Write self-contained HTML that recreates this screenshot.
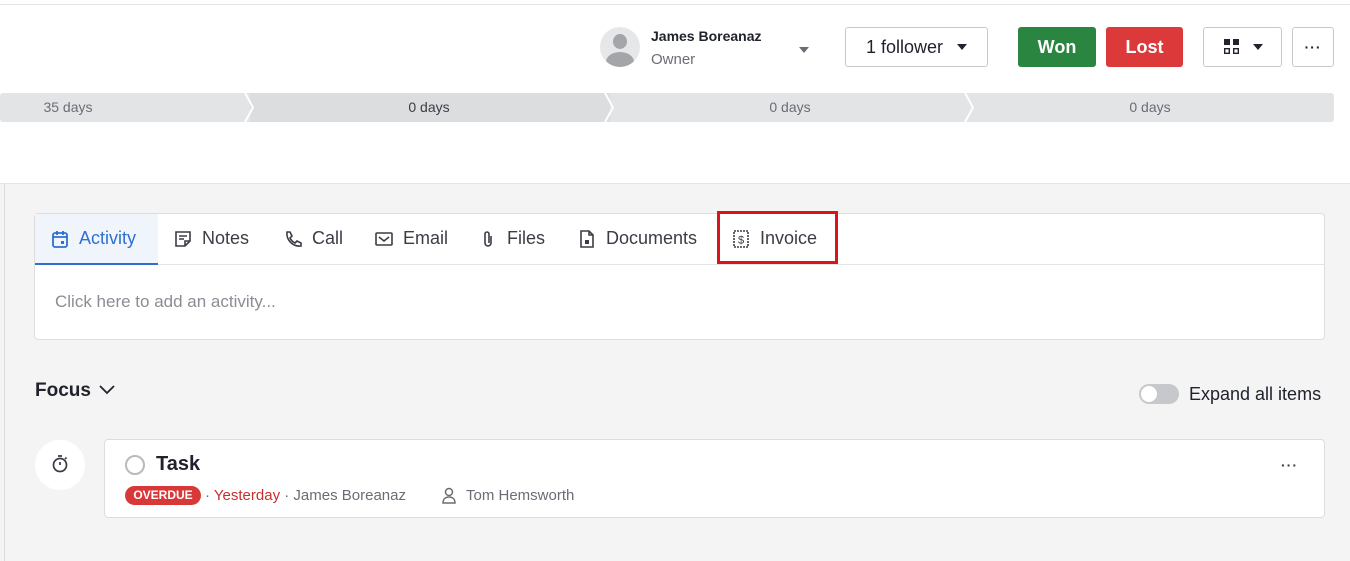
<!DOCTYPE html>
<html><head><meta charset="utf-8"><style>
*{box-sizing:border-box;margin:0;padding:0}
body{width:1350px;height:561px;overflow:hidden;background:#fff;font-family:"Liberation Sans",sans-serif;color:#21232c;position:relative}
.a{position:absolute}
.btn{position:absolute;border:1px solid #c6c8cc;border-radius:3px;background:#fff;display:flex;align-items:center;justify-content:center}
.tab{position:absolute;top:213px;height:51px;display:flex;align-items:center;font-size:18px;color:#3a3d45}
.tab svg{margin-right:9px}
</style></head><body>
<div class="a" style="left:0;top:4px;width:1350px;height:1px;background:#e3e4e6"></div>
<!-- owner -->
<div class="a" style="left:600px;top:27px;width:40px;height:40px;border-radius:50%;background:#e6e7e9;overflow:hidden">
<div class="a" style="left:13px;top:7px;width:14px;height:15px;border-radius:50%;background:#a3a5a9"></div>
<div class="a" style="left:6px;top:25px;width:28px;height:20px;border-radius:50%;background:#a3a5a9"></div></div>
<div class="a" style="left:651px;top:28px;font-size:14px;font-weight:bold;color:#21232c">James Boreanaz</div>
<div class="a" style="left:651px;top:51px;font-size:15px;color:#6a6d75">Owner</div>
<div class="a" style="left:799px;top:47px;border-left:5px solid transparent;border-right:5px solid transparent;border-top:6px solid #6a6d75"></div>
<div class="btn" style="left:845px;top:27px;width:143px;height:40px;font-size:18px;color:#21232c">1 follower<span style="margin-left:14px;border-left:5px solid transparent;border-right:5px solid transparent;border-top:6px solid #21232c"></span></div>
<div class="btn" style="left:1018px;top:27px;width:78px;height:40px;background:#2a8540;border-color:#2a8540;color:#fff;font-size:18px;font-weight:bold">Won</div>
<div class="btn" style="left:1106px;top:27px;width:77px;height:40px;background:#dc3a3a;border-color:#dc3a3a;color:#fff;font-size:18px;font-weight:bold">Lost</div>
<div class="btn" style="left:1203px;top:27px;width:79px;height:40px">
<svg width="18" height="18" viewBox="0 0 18 18"><rect x="1" y="1" width="6" height="6" fill="#21232c"/><rect x="10" y="1" width="6" height="6" fill="#21232c"/><rect x="1.7" y="10.7" width="4.6" height="4.6" fill="none" stroke="#21232c" stroke-width="1.4"/><rect x="10.7" y="10.7" width="4.6" height="4.6" fill="none" stroke="#21232c" stroke-width="1.4"/></svg>
<span style="margin-left:12px;border-left:5px solid transparent;border-right:5px solid transparent;border-top:6px solid #21232c"></span></div>
<div class="btn" style="left:1292px;top:27px;width:42px;height:40px;font-size:14px;font-weight:bold;letter-spacing:1px">···</div>
<!-- pipeline -->
<svg class="a" style="left:0;top:93px" width="1335" height="30">
<rect x="0" y="0" width="1334" height="29" rx="3" fill="#e3e4e6"/>
<rect x="250" y="0" width="360" height="29" fill="#dcdddf"/>
<path d="M245 0 L253 14.5 L245 29" fill="none" stroke="#fff" stroke-width="2"/>
<path d="M605 0 L613 14.5 L605 29" fill="none" stroke="#fff" stroke-width="2"/>
<path d="M965 0 L973 14.5 L965 29" fill="none" stroke="#fff" stroke-width="2"/>
<text x="68" y="19" font-size="14" fill="#6a6d75" text-anchor="middle" font-family="Liberation Sans">35 days</text>
<text x="429" y="19" font-size="14" fill="#3a3d45" text-anchor="middle" font-family="Liberation Sans">0 days</text>
<text x="790" y="19" font-size="14" fill="#6a6d75" text-anchor="middle" font-family="Liberation Sans">0 days</text>
<text x="1150" y="19" font-size="14" fill="#6a6d75" text-anchor="middle" font-family="Liberation Sans">0 days</text>
</svg>
<!-- grey area -->
<div class="a" style="left:0;top:183px;width:1350px;height:378px;background:#f4f4f4;border-top:1px solid #e3e4e6"></div>
<div class="a" style="left:4px;top:183px;width:1px;height:378px;background:#dcdddf"></div>
<div class="a" style="left:34px;top:213px;width:1291px;height:127px;background:#fff;border:1px solid #dcdddf;border-radius:4px"></div>
<div class="a" style="left:35px;top:264px;width:1289px;height:1px;background:#e3e4e6"></div>
<div class="a" style="left:35px;top:214px;width:123px;height:51px;background:#f0f5fc;border-bottom:2px solid #2f6fd1"></div>
<div class="tab" style="left:50px;color:#2f6fd1"><svg width="20" height="20" viewBox="0 0 20 20" fill="none" stroke="#2f6fd1" stroke-width="1.8"><rect x="3" y="4" width="14" height="14" rx="2"/><path d="M3 8h14M7 2v4M13 2v4"/><rect x="11" y="12" width="3" height="3" fill="#2f6fd1" stroke="none"/></svg>Activity</div>
<div class="tab" style="left:173px"><svg width="20" height="20" viewBox="0 0 20 20" fill="none" stroke="#3a3d45" stroke-width="1.6"><path d="M3 3h14v9l-5 5H3z M12 17v-5h5 M6 7h8 M6 10h5"/></svg>Notes</div>
<div class="tab" style="left:283px"><svg width="20" height="20" viewBox="0 0 20 20" fill="none" stroke="#3a3d45" stroke-width="1.6"><path d="M4 3l3 0 2 4-2 2c1 2 3 4 5 5l2-2 4 2v3c-8 1-15-6-14-14z"/></svg>Call</div>
<div class="tab" style="left:374px"><svg width="20" height="20" viewBox="0 0 20 20" fill="none" stroke="#3a3d45" stroke-width="1.6"><rect x="2" y="4" width="16" height="12" rx="1"/><path d="M5 8l5 4 5-4"/></svg>Email</div>
<div class="tab" style="left:478px"><svg width="20" height="20" viewBox="0 0 20 20" fill="none" stroke="#3a3d45" stroke-width="1.6"><path d="M13 7v7a3 3 0 0 1-6 0V5a2 2 0 0 1 4 0v9"/></svg>Files</div>
<div class="tab" style="left:577px"><svg width="20" height="20" viewBox="0 0 20 20" fill="none" stroke="#3a3d45" stroke-width="1.6"><path d="M4 2h8l4 4v12H4z M12 2v4h4"/><rect x="8" y="11" width="4" height="4" fill="#3a3d45" stroke="none"/></svg>Documents</div>
<div class="tab" style="left:731px"><svg width="20" height="20" viewBox="0 0 20 20" fill="none" stroke="#3a3d45" stroke-width="1.6"><path d="M3 2h14v16H3z" stroke-dasharray="2 1"/><text x="10" y="14.5" font-size="11" text-anchor="middle" fill="#3a3d45" stroke="none" font-family="Liberation Sans">$</text></svg>Invoice</div>
<div class="a" style="left:717px;top:211px;width:121px;height:53px;border:3px solid #d9141c"></div>
<div class="a" style="left:55px;top:292px;font-size:17px;color:#8a8d93">Click here to add an activity...</div>
<!-- focus -->
<div class="a" style="left:35px;top:380px;font-size:19px;font-weight:bold;color:#21232c">Focus</div>
<svg class="a" style="left:98px;top:383px" width="18" height="14"><path d="M2 3l7 7 7-7" fill="none" stroke="#21232c" stroke-width="1.8"/></svg>
<div class="a" style="left:1139px;top:384px;width:40px;height:20px;border-radius:10px;background:#c6c8cc"><div class="a" style="left:2px;top:2px;width:16px;height:16px;border-radius:50%;background:#fff"></div></div>
<div class="a" style="left:1189px;top:384px;font-size:18px;color:#21232c">Expand all items</div>
<div class="a" style="left:35px;top:440px;width:50px;height:50px;border-radius:50%;background:#fff"></div>
<svg class="a" style="left:50px;top:454px" width="20" height="20" viewBox="0 0 20 20" fill="none" stroke="#3a3d45" stroke-width="1.7"><circle cx="10" cy="11" r="6.5"/><path d="M10 11V8M8 2h4M15 5l1.5-1.5"/></svg>
<div class="a" style="left:104px;top:439px;width:1221px;height:79px;background:#fff;border:1px solid #dcdddf;border-radius:4px"></div>
<div class="a" style="left:125px;top:455px;width:20px;height:20px;border-radius:50%;border:2px solid #b8babe"></div>
<div class="a" style="left:156px;top:453px;font-size:20px;font-weight:bold;color:#21232c">Task</div>
<div class="a" style="left:1281px;top:457px;font-size:14px;font-weight:bold;color:#3a3d45;letter-spacing:1px">···</div>
<div class="a" style="left:125px;top:486px;width:76px;height:19px;border-radius:10px;background:#d93838;color:#fff;font-size:12px;font-weight:bold;text-align:center;line-height:19px">OVERDUE</div>
<div class="a" style="left:205px;top:487px;font-size:15px;color:#6a6d75">· <span style="color:#c92e2e">Yesterday</span> · James Boreanaz</div>
<svg class="a" style="left:441px;top:487px" width="16" height="18" viewBox="0 0 16 18" fill="none" stroke="#6a6d75" stroke-width="1.5"><circle cx="8" cy="5" r="3.5"/><path d="M2 16c0-4 2.5-6 6-6s6 2 6 6z"/></svg>
<div class="a" style="left:466px;top:487px;font-size:15px;color:#6a6d75">Tom Hemsworth</div>
</body></html>
